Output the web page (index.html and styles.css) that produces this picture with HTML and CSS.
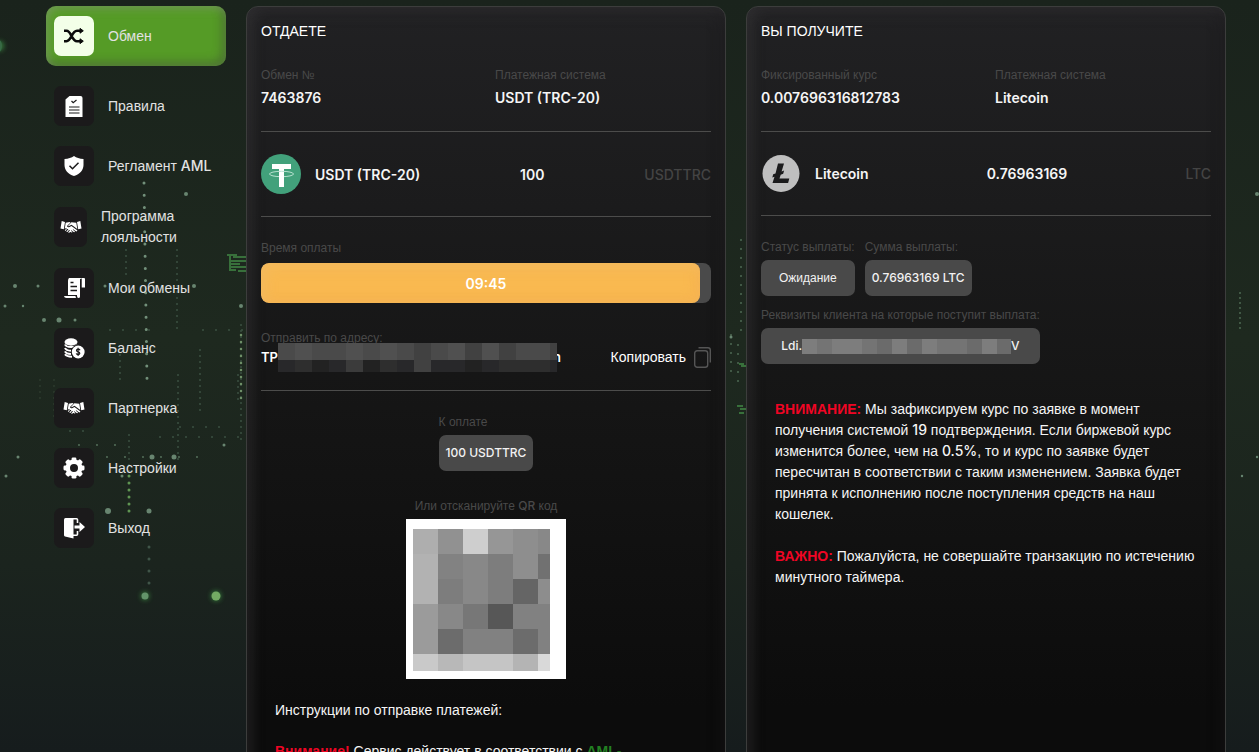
FILE: index.html
```html
<!DOCTYPE html>
<html lang="ru">
<head>
<meta charset="utf-8">
<meta name="viewport" content="width=device-width, initial-scale=1">
<title>Обмен</title>
<link rel="stylesheet" href="styles.css">
</head>
<body>
<svg class="backdrop" viewBox="0 0 1259 752" preserveAspectRatio="xMidYMid slice" aria-hidden="true">
  <defs>
    <filter id="soft" x="-50%" y="-50%" width="200%" height="200%"><feGaussianBlur stdDeviation="0.7"/></filter>
    <filter id="glow" x="-100%" y="-100%" width="300%" height="300%"><feGaussianBlur stdDeviation="2.5"/></filter>
  </defs>
  <g fill="none" stroke-linecap="round" filter="url(#soft)">
    <path d="M144 183L147 379" stroke="#72907a" stroke-width="3" stroke-dasharray="0 12.2"/>
    <g stroke="#3b5040" stroke-width="2">
      <path d="M126 250V280M177 250V330M120 355V380M200 350V415M178 375V460M129 435V475M241 325V440M238 375V400" stroke-dasharray="0 6"/>
      <path d="M741 240V335M731 335V375M738 345V390" stroke="#4c6852" stroke-dasharray="0 9"/>
      <path d="M1240 293V330" stroke="#4c6852" stroke-dasharray="0 5"/>
      <path d="M160 437H240M180 427H225M70 431H95M110 330H150M203 330H245" stroke-dasharray="0 13"/>
      <path d="M40 380V400M54 380V420" stroke="#2b3b2f" stroke-dasharray="0 6"/>
    </g>
    <path d="M241 335V405" stroke="#6f9069" stroke-width="2.5" stroke-dasharray="0 7"/>
    <path d="M129 476V512" stroke="#5f9552" stroke-width="3" stroke-dasharray="0 7"/>
    <path d="M149 547V590" stroke="#405548" stroke-width="3" stroke-dasharray="0 12"/>
    <path d="M79 445H130M107 457H200" stroke="#546f5a" stroke-width="2" stroke-dasharray="0 18"/>
  </g>
  <g fill="#678570" filter="url(#soft)">
    <circle cx="186" cy="194" r="2"/><circle cx="15" cy="286" r="2"/><circle cx="38" cy="286" r="1.5"/><circle cx="105" cy="286" r="1.5"/><circle cx="194" cy="286" r="2"/><circle cx="5" cy="306" r="1.5"/><circle cx="23" cy="306" r="1.2"/><circle cx="241" cy="306" r="2"/><circle cx="44" cy="320" r="2"/><circle cx="59" cy="320" r="2.5"/><circle cx="75" cy="320" r="1.5"/><circle cx="18" cy="457" r="1.5"/><circle cx="152" cy="457" r="2.5"/><circle cx="174" cy="457" r="2.5"/><circle cx="224" cy="445" r="1.5"/><circle cx="6" cy="476" r="1.5"/><circle cx="108" cy="511" r="3"/><circle cx="149" cy="511" r="2.5"/><circle cx="122" cy="476" r="1.5"/><circle cx="1257" cy="194" r="2"/><circle cx="1242" cy="476" r="1.2"/><circle cx="1257" cy="457" r="1.2"/><circle cx="731" cy="337" r="1.5"/>
  </g>
  <g fill="#3fa047" filter="url(#glow)" opacity=".7"><circle cx="145" cy="596" r="4"/><circle cx="216" cy="596" r="5"/><circle cx="-1" cy="46" r="5"/></g>
  <g filter="url(#soft)"><circle cx="145" cy="596" r="3.5" fill="#64946a"/><circle cx="216" cy="596" r="4.5" fill="#73aa64"/><ellipse cx="-1" cy="46" rx="3" ry="6" fill="#376a44"/></g>
  <g stroke="#38703a" stroke-width="2" fill="none" filter="url(#soft)">
    <path d="M227 255H237M233 257H246M229 261H246M229 264H240M231 267H246M229 270H236M238 271H246M230 256V271M739 364H744M741 366H746M737 406H743M740 409H746M739 413H744"/>
  </g>
</svg>

<svg class="defs" aria-hidden="true">
  <symbol id="i-hands" viewBox="0 0 22 14">
    <path fill="currentColor" d="M1.7 1 5 1.9 3.8 9.2.5 8.5ZM20.3 1 17 1.9l1.2 7.3 3.3-.7ZM5.7 2.8 9.400 2l1.200.5-3.400 3.300c-.5 1.300 1 1.900 2.400 1.100l1.800-1 5.800 4.400c.3.8-.4 1.400-1.300 1l-2.800-2.100-.3.5 2.200 1.800c-.3.8-1 .8-1.800.3l-1.900-1.600-.4.5 1.500 1.300c-.4.8-1.100.7-1.900.1l-.8-.7c.4-1-.3-1.600-1.200-1.300 0-1-.8-1.400-1.600-1-.1-.9-1-1.200-1.700-.6L4.700 8.800ZM11.400 2.300l4.900.5 1 6.100-5.800-4.100-2.800 1.400-.7-.2ZM4.900 10.200l1-1.100c.6-.4 1 .2.7.7l-.8.9c-.6.3-1.100-.1-.9-.5ZM6.500 11.300 8 9.700c.6-.4 1.100.2.7.7l-1.300 1.500c-.6.3-1.100-.1-.9-.6ZM8.300 12.200l1-1.100c.6-.4 1.200.2.8.8l-.9.900c-.6.2-1.100-.1-.9-.6Z"/>
  </symbol>
</svg>

<div class="page">
  <nav class="menu" aria-label="Меню">
    <a class="menu-item menu-item-active" href="#">
      <span class="menu-icon"><svg width="20" height="16" viewBox="0 0 20 16"><g fill="none" stroke="currentColor" stroke-width="2.6"><path d="M0 2.800h2.500c5 0 5 10.400 10.500 10.400h3.500M0 13.200h2.500C7.500 13.200 7.500 2.800 13 2.800h3.500"/></g><path fill="currentColor" stroke="currentColor" stroke-linejoin="round" d="m16 .4 3.300 2.400L16 5.200ZM16 10.800l3.300 2.400-3.300 2.400Z"/></svg></span>
      <span>Обмен</span>
    </a>
    <a class="menu-item" href="#">
      <span class="menu-icon"><svg width="18" height="21" viewBox="0 0 18 21"><path fill="currentColor" d="M4.500 0H15.500Q17.500 0 17.500 2V21H.500V3.500Z"/><path fill="none" stroke="#1b1a1b" stroke-width="1.200" d="m6.500 5 1.700 1.700L11.500 4M4 11h10.500M4 14h10.500M4 17h10.500"/></svg></span>
      <span>Правила</span>
    </a>
    <a class="menu-item" href="#">
      <span class="menu-icon"><svg width="20" height="20" viewBox="0 0 20 20"><path fill="currentColor" d="M10 0c2.500 1.800 5.500 2.800 9.500 3v6c0 5-3.500 9-9.500 11C4 18 .5 14 .5 9V3C4.500 2.800 7.500 1.800 10 0Z"/><path fill="none" stroke="#1b1a1b" stroke-width="1.500" d="m5.500 9.700 3 3 6-6"/></svg></span>
      <span>Регламент <span class="latin">AML</span></span>
    </a>
    <a class="menu-item" href="#">
      <span class="menu-icon menu-icon-narrow"><svg width="22" height="14"><use href="#i-hands"/></svg></span>
      <span>Программа лояльности</span>
    </a>
    <a class="menu-item" href="#">
      <span class="menu-icon"><svg width="21" height="20" viewBox="0 0 21 20"><path fill="currentColor" d="M5 0h12.500q-1.500.5-1.500 3v15.500q0 1.500-1.500 1.500-1.500 0-1.500-2v-1H4V3q0-2 1-3ZM17.500 0h2.500q1 0 1 1v8.500h-3.500ZM0 18h11.500q0 1.300.8 2H2.500Q.2 20 0 18Z"/><path stroke="#1b1a1b" stroke-width="1.300" d="M6.500 4.500h3M6.500 8.500h6.500M6.500 12.500h6.500M16.800 1v9"/></svg></span>
      <span>Мои обмены</span>
    </a>
    <a class="menu-item" href="#">
      <span class="menu-icon"><svg width="21" height="21" viewBox="0 0 21 21"><ellipse cx="7" cy="4" rx="6.500" ry="3.700" fill="currentColor"/><path fill="none" stroke="currentColor" stroke-width="2" d="M1 6.500q1 2.500 6 2.500t6.500-2M1 10q1 2.500 6 2.700M1 13.300q1 2.300 6 2.700M1 16.300q1.500 2.300 7 2.500"/><circle cx="14" cy="14" r="7.200" fill="#1b1a1b"/><circle cx="14.200" cy="14" r="6.400" fill="currentColor"/><path fill="none" stroke="#1b1a1b" stroke-width="1.200" d="M16 12.300q-.5-1.200-2-1.100t-1.500 1.300q.1 1 1.700 1.400t1.600 1.500q-.2 1.200-1.700 1.200t-1.900-1.200M14.100 9.700v8.400"/></svg></span>
      <span>Баланс</span>
    </a>
    <a class="menu-item" href="#">
      <span class="menu-icon"><svg width="22" height="14"><use href="#i-hands"/></svg></span>
      <span>Партнерка</span>
    </a>
    <a class="menu-item" href="#">
      <span class="menu-icon"><svg width="22" height="22" viewBox="-11 -11 22 22"><circle r="6.200" fill="none" stroke="currentColor" stroke-width="4.400"/><g fill="currentColor"><rect id="tooth" x="-2.400" y="-10.500" width="4.800" height="5" rx="1.300"/><use href="#tooth" transform="rotate(45)"/><use href="#tooth" transform="rotate(90)"/><use href="#tooth" transform="rotate(135)"/><use href="#tooth" transform="rotate(180)"/><use href="#tooth" transform="rotate(225)"/><use href="#tooth" transform="rotate(270)"/><use href="#tooth" transform="rotate(315)"/></g></svg></span>
      <span>Настройки</span>
    </a>
    <a class="menu-item" href="#">
      <span class="menu-icon"><svg width="21" height="21" viewBox="0 0 21 21"><path fill="currentColor" d="M1.500 0H8l1.500 1v19.500L1 18.500Q0 18 0 17V1.500Q0 0 1.500 0Z"/><path fill="none" stroke="currentColor" stroke-width="1.600" d="M8 .8h4.500q1 0 1 1V5M8 17.200h4.500q1 0 1-1V13"/><path fill="currentColor" d="M10.500 7.500h5V4l5.500 5-5.500 5v-3.500h-5Z"/></svg></span>
      <span>Выход</span>
    </a>
  </nav>

  <main class="panel">
    <h2 class="panel-title">Отдаете</h2>
    <div class="facts">
      <div class="fact"><span class="label">Обмен №</span><strong class="value">7463876</strong></div>
      <div class="fact"><span class="label">Платежная система</span><strong class="value">USDT (TRC-20)</strong></div>
    </div>
    <div class="amount">
      <div class="coin">
        <svg class="coin-icon" viewBox="0 0 40 40" aria-hidden="true"><circle cx="20" cy="20" r="20" fill="#42a17b"/><path fill="#fff" d="M11 10h19v5h-7v18h-5V15h-7Z"/><ellipse cx="20.500" cy="20" rx="12" ry="2.700" fill="none" stroke="#b9e2d1"/><path fill="#fff" d="M18 20h5v4h-5Z"/></svg>
        <strong class="value">USDT (TRC-20)</strong>
      </div>
      <strong class="value">100</strong>
      <span class="code">USDTTRC</span>
    </div>
    <div class="timer">
      <span class="label" id="timer-label">Время оплаты</span>
      <div class="timer-bar" role="progressbar" aria-labelledby="timer-label" aria-valuemin="0" aria-valuemax="600" aria-valuenow="585">
        <div class="timer-fill" style="width:97.5%"></div>
        <span class="timer-text">09:45</span>
      </div>
    </div>
    <div class="send">
      <span class="label">Отправить по адресу:</span>
      <div class="send-row">
        <div class="address">
          <span>TP</span>
          <svg class="address-mask" viewBox="0 0 279 29" shape-rendering="crispEdges" aria-hidden="true">
            <path fill="#4a4a4a" d="M0 0h279v17H0z"/><path fill="#28282a" d="M0 17h279v12H0z"/>
            <path fill="#505050" d="M17 0h17v17H17zM68 0h17v17H68zM102 0h17v17h-17zM170 0h17v17h-17zM204 0h17v17h-17z"/>
            <path fill="#414141" d="M136 0h17v29h-17zM187 0h17v17h-17zM221 0h17v17h-17zM272 0h7v17h-7z"/>
            <path fill="#3b3b3b" d="M68 17h17v12H68z"/>
            <path fill="#222" d="M34 17h17v12H34zM85 17h17v12H85zM187 17h17v12h-17z"/>
            <path fill="#2e2e2e" d="M17 17h17v12H17zM102 17h17v12h-17zM221 17h51v12h-51z"/>
          </svg>
          <span>n</span>
        </div>
        <button class="copy" type="button">Копировать
          <svg width="17" height="21" viewBox="0 0 17 21" fill="none" stroke="#555" aria-hidden="true"><rect x=".7" y="3.700" width="13" height="16.500" rx="2.500" stroke-width="1.400"/><path stroke-width="1.400" d="M4.500.7H14q2.300 0 2.300 2.300v12.500"/></svg>
        </button>
      </div>
    </div>
    <div class="pay">
      <div class="field">
        <span class="label">К оплате</span>
        <span class="chip">100 USDTTRC</span>
      </div>
      <div class="scan">
        <span class="label">Или отсканируйте <span class="latin">QR</span> код</span>
        <svg class="qr" viewBox="0 0 160 160" shape-rendering="crispEdges" role="img" aria-label="QR код">
          <path fill="#fff" d="M0 0h160v160H0z"/>
          <g transform="translate(7 10)">
            <path fill="#888" d="M0 0h137v142H0z"/>
            <path fill="#aeaeae" d="M0 0h25v25H0z"/><path fill="#919191" d="M25 0h25v25H25z"/><path fill="#cecece" d="M50 0h25v25H50z"/><path fill="#969696" d="M75 0h25v25H75z"/><path fill="#8e8e8e" d="M100 0h25v50h-25z"/>
            <path fill="#b2b2b2" d="M0 25h25v50H0z"/><path fill="#828282" d="M25 25h25v25H25z"/><path fill="#7d7d7d" d="M75 25h25v50H75zM25 50h25v25H25z"/><path fill="#717171" d="M125 25h12v25h-12z"/>
            <path fill="#656565" d="M100 50h25v25h-25z"/><path fill="#8d8d8d" d="M125 50h12v25h-12z"/>
            <path fill="#9b9b9b" d="M0 75h25v50H0z"/><path fill="#777" d="M50 75h25v25H50z"/><path fill="#575757" d="M75 75h25v25H75z"/><path fill="#818181" d="M100 75h37v25h-37zM50 100h50v25H50zM125 100h12v25h-12z"/>
            <path fill="#6c6c6c" d="M25 100h25v25H25zM100 100h25v25h-25z"/>
            <path fill="#c9c9c9" d="M0 125h25v17H0z"/><path fill="#b8b8b8" d="M25 125h25v17H25z"/><path fill="#c5c5c5" d="M50 125h50v17H50z"/><path fill="#b4b4b4" d="M100 125h25v17h-25z"/><path fill="#d9d9d9" d="M125 125h12v17h-12z"/>
          </g>
        </svg>
      </div>
    </div>
    <div class="note note-instructions">
      <p>Инструкции по отправке платежей:</p>
      <p><strong class="alert">Внимание!</strong> Сервис действует в соответствии с <a class="aml" href="#">AML-</a></p>
    </div>
  </main>

  <section class="panel">
    <h2 class="panel-title">Вы получите</h2>
    <div class="facts">
      <div class="fact"><span class="label">Фиксированный курс</span><strong class="value">0.007696316812783</strong></div>
      <div class="fact"><span class="label">Платежная система</span><strong class="value">Litecoin</strong></div>
    </div>
    <div class="amount">
      <div class="coin">
        <svg class="coin-icon coin-icon-ltc" viewBox="0 0 40 39" aria-hidden="true"><circle cx="20" cy="19.500" r="18.500" fill="#bfbfbf"/><path fill="#1b1b1c" d="M17 9.500h6l-2.400 8 2.500-1-.9 3.200-2.500 1-1.200 3.800h9.800l-1.200 4.500H11.500l2-6.300-2.200.9.900-3.300 2.300-.9Z"/></svg>
        <strong class="value">Litecoin</strong>
      </div>
      <strong class="value">0.76963169</strong>
      <span class="code">LTC</span>
    </div>
    <div class="payout">
      <div class="payout-row">
        <div class="field"><span class="label">Статус выплаты:</span><span class="chip chip-text">Ожидание</span></div>
        <div class="field"><span class="label">Сумма выплаты:</span><span class="chip">0.76963169 LTC</span></div>
      </div>
      <div class="field">
        <span class="label">Реквизиты клиента на которые поступит выплата:</span>
        <span class="chip chip-wallet">Ldi.<svg class="wallet-mask" viewBox="0 0 209 15" shape-rendering="crispEdges" aria-hidden="true"><path fill="#747474" d="M0 0h209v15H0z"/><path fill="#7d7d7d" d="M0 0h15v15H0zM30 0h30v15H30zM90 0h15v15H90zM120 0h15v15h-15zM180 0h15v15h-15z"/><path fill="#6b6b6b" d="M75 0h15v15H75zM105 0h15v15h-15zM165 0h15v15h-15zM195 0h14v15h-14z"/></svg>V</span>
      </div>
    </div>
    <div class="note note-rate">
      <p><strong class="alert">ВНИМАНИЕ:</strong> Мы зафиксируем курс по заявке в момент получения системой <span class="latin">19</span> подтверждения. Если биржевой курс изменится более, чем на <span class="latin">0.5%</span>, то и курс по заявке будет пересчитан в соответствии с таким изменением. Заявка будет принята к исполнению после поступления средств на наш кошелек.</p>
      <p><strong class="alert">ВАЖНО:</strong> Пожалуйста, не совершайте транзакцию по истечению минутного таймера.</p>
    </div>
  </section>
</div>
</body>
</html>
```
FILE: styles.css
```css
*, *::before, *::after { box-sizing: border-box; }

html, body { height: 100%; }

body {
  margin: 0;
  overflow: hidden;
  background: linear-gradient(180deg, #1a231c 0%, #1e291f 45%, #1b241e 75%, #161c1d 100%);
  color: #fff;
  font-family: "Liberation Sans", Arial, sans-serif;
  font-size: 14px;
  line-height: 21px;
}

p, h2 { margin: 0; }

.backdrop {
  position: absolute;
  inset: 0;
  width: 100%;
  height: 100%;
}

.defs { display: none; }

.page {
  position: relative;
  display: grid;
  grid-template-columns: 180px minmax(0, 1fr) minmax(0, 1fr);
  gap: 20px;
  padding: 6px 33px 0 46px;
}

.latin, .value, .code, .chip, .address, .timer-text {
  font-family: Inter, "Liberation Sans", sans-serif;
  font-weight: 500;
}

.latin { line-height: 1; }

/* Side menu */
.menu { display: flex; flex-direction: column; }

.menu-item {
  display: flex;
  align-items: center;
  gap: 14px;
  padding: 10px 8px;
  border-radius: 10px;
  color: #e2e2e2;
  text-decoration: none;
}

.menu-item-active {
  margin-bottom: 10px;
  background: #559b26;
  box-shadow: inset 3px 3px 8px rgba(160, 160, 160, .35), inset -4px -4px 10px rgba(60, 60, 60, .4);
}

.menu-icon {
  display: flex;
  flex: none;
  align-items: center;
  justify-content: center;
  width: 40px;
  height: 40px;
  border-radius: 7px;
  background: #1b1a1b;
  color: #fff;
}

.menu-icon-narrow { width: 33px; }

.menu-item-active .menu-icon { background: #f3ffe8; color: #0b0b0b; }

/* Panels */
.panel {
  padding: 14px;
  border: 1px solid #3c3d3c;
  border-radius: 12px;
  background: linear-gradient(180deg, #212123 0, #1b1b1c 200px, #151515 400px, #0c0c0c 700px);
  box-shadow: inset 0 6px 16px rgba(80, 75, 80, .2), inset 8px 0 12px rgba(70, 70, 70, .2), inset -8px 0 12px rgba(0, 0, 0, .15);
}

.panel-title {
  font-size: 14px;
  font-weight: 400;
  text-transform: uppercase;
}

.label {
  color: #494949;
  font-size: 12px;
  line-height: 18px;
}

.value { color: #f5f5f5; font-weight: 600; }

.code { color: #444; }

.facts {
  display: grid;
  grid-template-columns: 13fr 12fr;
  padding: 24px 0 23px;
  border-bottom: 1px solid #4c4c4b;
}

.fact { display: flex; flex-direction: column; gap: 3px; }

.amount {
  display: flex;
  align-items: center;
  justify-content: space-between;
  padding: 22px 0;
  border-bottom: 1px solid #4c4c4b;
}

.coin { display: flex; align-items: center; gap: 14px; }

.coin-icon { display: block; width: 40px; height: 40px; }

.coin-icon-ltc { height: 39px; }

.timer {
  display: flex;
  flex-direction: column;
  gap: 6px;
  padding-top: 22px;
}

.timer-bar {
  display: grid;
  height: 40px;
  overflow: hidden;
  border-radius: 8px;
  background: #4a4a4a;
}

.timer-fill {
  grid-area: 1 / 1;
  border-radius: 8px;
  background: #f9b950;
  box-shadow: inset 4px 4px 12px rgba(240, 190, 110, .5), inset -4px -4px 12px rgba(245, 170, 80, .4);
}

.timer-text {
  grid-area: 1 / 1;
  place-self: center;
  font-weight: 600;
}

.send {
  display: flex;
  flex-direction: column;
  padding: 26px 0 22px;
  border-bottom: 1px solid #4c4c4b;
}

.send-row {
  display: flex;
  align-items: center;
  justify-content: space-between;
  height: 21px;
}

.address {
  display: flex;
  align-items: center;
  font-size: 13px;
  font-weight: 600;
}

.address > span:last-child { margin-left: -4px; }

.address-mask { position: relative; width: 279px; height: 29px; }

.copy {
  display: flex;
  align-items: center;
  gap: 8px;
  padding: 0;
  border: 0;
  background: none;
  color: #fff;
  font: inherit;
  cursor: pointer;
}

.pay {
  display: flex;
  flex-direction: column;
  align-items: center;
  gap: 26px;
  padding-top: 22px;
}

.field { display: flex; flex-direction: column; gap: 4px; }

.chip {
  padding: 0 7px;
  border-radius: 7px;
  background: #494949;
  color: #f2f2f2;
  font-size: 12px;
  line-height: 36px;
  text-align: center;
  white-space: nowrap;
}

.chip-text { font-family: "Liberation Sans", Arial, sans-serif; }

.scan {
  display: flex;
  flex-direction: column;
  align-items: center;
  gap: 4px;
}

.qr { display: block; width: 160px; height: 160px; }

.payout {
  display: flex;
  flex-direction: column;
  align-items: flex-start;
  gap: 10px;
  padding-top: 22px;
}

.payout-row { display: flex; gap: 10px; }

.chip-wallet {
  display: flex;
  align-items: center;
  justify-content: center;
}

.wallet-mask { width: 209px; height: 15px; }

/* Notes */
.note {
  display: flex;
  flex-direction: column;
  gap: 21px;
  padding: 21px 14px 14px;
  color: #f5f5f5;
}

.note-instructions { gap: 20px; }

.note-rate { padding-top: 35px; }

.alert { color: #f00524; }

.aml { color: #228022; font-weight: 700; text-decoration: none; }
```
